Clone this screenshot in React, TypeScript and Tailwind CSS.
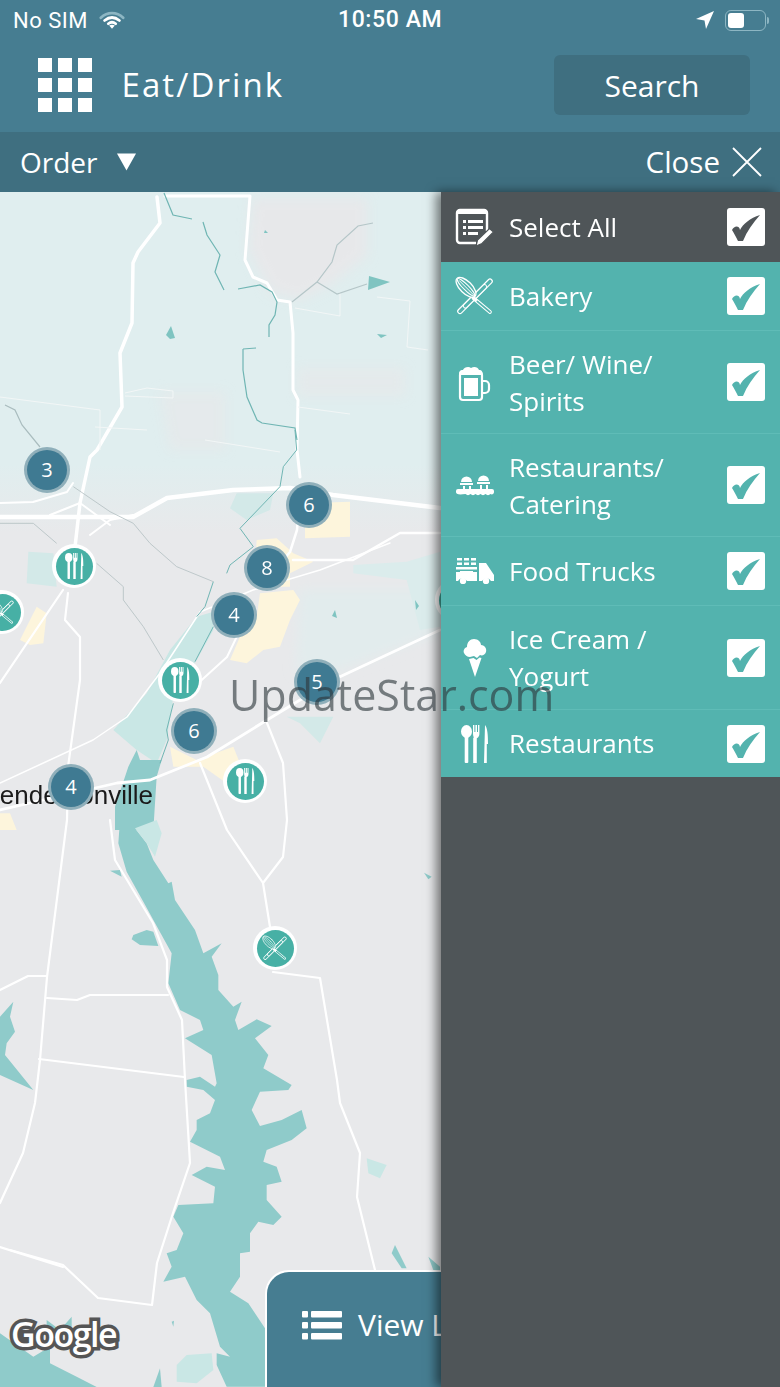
const sans = "font-['Open_Sans',sans-serif]";

function Check({ color }: { color: string }) {
  return (
    <span className="w-[38px] h-[38px] bg-white rounded-[3px] flex items-center justify-center shrink-0">
      <svg width="38" height="38" viewBox="0 0 38 38">
        <path d="M5 22C7 18 12 17 13 22C16 16 23 10 33 7C26 15 20 23 16 33L11 33C9 29 7 25 5 22Z" fill={color} />
      </svg>
    </span>
  );
}

function Whisk({ size, bg, sw = 1 }: { size: number; bg: string; sw?: number }) {
  return (
    <svg width={size} height={size} viewBox="45 50 120 120" fill="none" strokeLinecap="round">
      <line x1="150" y1="66" x2="60" y2="156" stroke="#fff" strokeWidth={17} />
      <line x1="150" y1="66" x2="60" y2="156" stroke={bg} strokeWidth={10} />
      <line x1="134" y1="82" x2="76" y2="140" stroke="#fff" strokeWidth={15} />
      <line x1="134" y1="82" x2="76" y2="140" stroke={bg} strokeWidth={9} />
      <line x1="100" y1="116" x2="150" y2="158" stroke="#fff" strokeWidth={11} />
      <line x1="112" y1="126" x2="150" y2="158" stroke={bg} strokeWidth={5} />
      <ellipse cx="78" cy="84" rx="18" ry="38" transform="rotate(-45 78 84)" fill={bg} stroke="#fff" strokeWidth={4 * sw} />
      <ellipse cx="78" cy="84" rx="8" ry="36" transform="rotate(-45 78 84)" stroke="#fff" strokeWidth={3 * sw} />
      <path d="M58 64L104 110" stroke="#fff" strokeWidth={3 * sw} />
    </svg>
  );
}

function Utensils({ w, h }: { w: number; h: number }) {
  return (
    <svg width={w} height={h} viewBox="0 0 28 38" fill="#fff">
      <ellipse cx="5.5" cy="6.5" rx="5.5" ry="6.5" />
      <rect x="3.7" y="11" width="3.6" height="27" rx="1" />
      <path d="M12 0h1.4v7h1V0h1.6v7h1V0h1.4v9c0 2.4-1.4 3.6-2.6 4.2V38h-3.6V13.2C13.4 12.6 12 11.4 12 9Z" />
      <path d="M24 0c2.4 3 3 9 3 19h-1.2V38H23Z" />
    </svg>
  );
}

function SelectAllIcon() {
  return (
    <svg width="40" height="40" viewBox="0 0 40 40" fill="none">
      <path d="M32 24V6a3 3 0 0 0-3-3H5a3 3 0 0 0-3 3v27a3 3 0 0 0 3 3h16" stroke="#fff" strokeWidth="2.4" />
      <rect x="2" y="3" width="30" height="4" fill="#fff" />
      <g fill="#fff">
        <rect x="8" y="13" width="3" height="3" />
        <rect x="8" y="19" width="3" height="3" />
        <rect x="8" y="25" width="3" height="3" />
        <rect x="13" y="13" width="15" height="3" />
        <rect x="13" y="19" width="15" height="3" />
        <rect x="13" y="25" width="10" height="3" />
      </g>
      <path d="M34.500 21.500l4 3.500-11.500 11.500-6 2.500 1.500-6Z" fill="#fff" stroke="#4f5558" strokeWidth="1.200" />
    </svg>
  );
}

function BeerIcon() {
  return (
    <svg width="36" height="40" viewBox="0 0 36 40" fill="none">
      <path d="M3 13c-2-3 0-5 3-5 1-3 6-4 8-2 3-2 7-1 8 2 3 0 4 2 3 5Z" fill="#fff" />
      <rect x="3" y="10" width="22" height="28" rx="3" stroke="#fff" strokeWidth="2.2" />
      <rect x="7" y="16" width="14" height="18" fill="#fff" />
      <path d="M25 19h3a4 4 0 0 1 4 4v4a4 4 0 0 1-4 4h-3" stroke="#fff" strokeWidth="2.200" />
    </svg>
  );
}

function CateringIcon() {
  return (
    <svg width="38" height="22" viewBox="0 0 38 22" fill="#fff">
      <path d="M5 8a5.500 5.500 0 0 1 11 0Z" />
      <rect x="4" y="9" width="13" height="2" />
      <path d="M22 7a5.500 5.500 0 0 1 11 0Z" />
      <rect x="21" y="8" width="13" height="2" />
      <rect x="7" y="12" width="2" height="3" />
      <rect x="13" y="12" width="2" height="3" />
      <rect x="24" y="11" width="2" height="4" />
      <rect x="30" y="11" width="2" height="4" />
      <path d="M2 15h34a2 2 0 0 1 2 2v1c0 2-2 3-3.500 2-1.500 1.500-3.500 1.500-5 0-1.500 1.500-3.500 1.500-5 0-1.500 1.500-3.500 1.500-5 0-1.500 1.500-3.500 1.500-5 0-1.500 1.500-3.500 1.500-5 0C2 21 0 20 0 18v-1a2 2 0 0 1 2-2Z" />
    </svg>
  );
}

function TruckIcon() {
  return (
    <svg width="38" height="26" viewBox="0 0 38 26" fill="#fff">
      <rect x="1" y="0" width="5" height="2.500" />
      <rect x="8" y="0" width="5" height="2.500" />
      <rect x="15" y="0" width="5" height="2.500" />
      <rect x="1" y="4.500" width="5" height="2.500" />
      <rect x="8" y="4.500" width="5" height="2.500" />
      <rect x="15" y="4.500" width="5" height="2.500" />
      <rect x="0" y="9" width="21" height="2.500" />
      <path d="M0 14h21v9H11a5 5 0 0 0-9 0H0Z" />
      <rect x="4" y="13" width="13" height="2" />
      <circle cx="7" cy="23" r="3.200" />
      <path d="M23 5h7l6 9 2 3v6h-3a5 5 0 0 0-9 0h-3Z" />
      <circle cx="30" cy="23" r="3.200" />
    </svg>
  );
}

function IceCreamIcon() {
  return (
    <svg width="26" height="38" viewBox="0 0 26 38" fill="#fff">
      <path d="M12 0c4 0 7 3 7 6 4 0 6 4 5 7s-4 4-6 3l-3 3-3-2-4 1c-3 0-5-2-6-4s0-5 3-6c0-5 3-8 7-8Z" />
      <path d="M7 20l4.500-1 3 2 3-2.500 2 .5L13 38Z" />
    </svg>
  );
}

function ListIcon() {
  return (
    <svg width="40" height="29" viewBox="0 0 40 29" fill="#fff">
      <rect x="0" y="0" width="6" height="6.500" rx="1" />
      <rect x="0" y="11" width="6" height="6.500" rx="1" />
      <rect x="0" y="22" width="6" height="6.500" rx="1" />
      <rect x="9" y="0" width="31" height="6.500" rx="1" />
      <rect x="9" y="11" width="31" height="6.500" rx="1" />
      <rect x="9" y="22" width="31" height="6.500" rx="1" />
    </svg>
  );
}

function StatusBar() {
  return (
    <div className="h-[40px] relative flex items-center justify-between pl-[13px] pr-[11px] text-white font-['Roboto',sans-serif] text-[22px]">
      <div className="flex items-center gap-[11px]">
        <span className="tracking-[0.5px]">No SIM</span>
        <svg width="26" height="22" viewBox="0 0 28 22" fill="none" strokeLinecap="round">
          <path d="M2 8.500C9 2 19 2 26 8.500" stroke="#8db6c3" strokeWidth="3" />
          <path d="M6 11.500C11 7.500 17 7.500 22 11.500" stroke="#fff" strokeWidth="3" />
          <path d="M10 15C12.500 13 15.500 13 18 15" stroke="#fff" strokeWidth="3" />
          <path d="M14 20.500l3-3.500c-2-1.200-4-1.200-6 0Z" fill="#fff" />
        </svg>
      </div>
      <span className="absolute left-[338px] font-medium text-[23px] tracking-[0.6px]">10:50 AM</span>
      <div className="flex items-center gap-[11px]">
        <svg width="18" height="18" viewBox="0 0 18 18" fill="#fff">
          <path d="M18 0L10 18 8.500 9.500 0 8Z" />
        </svg>
        <div className="flex items-center gap-[1px]">
          <div className="w-[41px] h-[21px] rounded-[6px] border-[1.5px] border-[#8db6c3] p-[2px]">
            <div className="w-[16px] h-full bg-white rounded-[3px]" />
          </div>
          <div className="w-[2px] h-[7px] bg-[#8db6c3] rounded-r-sm" />
        </div>
      </div>
    </div>
  );
}

function Header() {
  return (
    <div className="h-[92px] flex items-start pl-[38px] pr-[30px] pt-[18px]">
      <div className="grid grid-cols-3 gap-[6.500px] w-[53.500px] shrink-0">
        {[0, 1, 2, 3, 4, 5, 6, 7, 8].map((i) => (
          <div key={i} className="h-[13.500px] bg-white" />
        ))}
      </div>
      <div className="ml-[30px] mt-[2px] text-white text-[33px] leading-[50px] font-medium tracking-[2.100px]">Eat/Drink</div>
      <div className="ml-auto -mt-[3px] w-[196px] h-[60px] rounded-[6px] bg-[#3f6f80] text-white text-[30px] flex items-center justify-center">Search</div>
    </div>
  );
}

function OrderBar() {
  return (
    <div className="h-[60px] bg-[#3f6f80] flex items-center justify-between pl-[20px] pr-[18px] text-white">
      <div className="flex items-center gap-[18px] text-[28px]">
        <span>Order</span>
        <svg width="21" height="18" viewBox="0 0 22 18" fill="#fff">
          <path d="M1 0h20L11 18Z" />
        </svg>
      </div>
      <div className="flex items-center gap-[12px] text-[29.500px]">
        <span>Close</span>
        <svg width="30" height="30" viewBox="0 0 30 30" stroke="#fff" strokeWidth="1.800">
          <path d="M1 1L29 29M29 1L1 29" />
        </svg>
      </div>
    </div>
  );
}

function MapDrawing() {
  const road = "#ffffff";
  return (
    <svg className="absolute inset-0" width="441" height="1195" viewBox="0 192 441 1195" fill="none">
      <defs>
        <linearGradient id="pale" x1="0" y1="0" x2="0" y2="1">
          <stop offset="0.8" stopColor="#e0eeef" />
          <stop offset="1" stopColor="#e8e9eb" />
        </linearGradient>
        <filter id="soft" x="-20%" y="-20%" width="140%" height="140%">
          <feGaussianBlur stdDeviation="6" />
        </filter>
      </defs>
      <rect x="0" y="192" width="441" height="1195" fill="#e8e9eb" />
      <rect x="0" y="192" width="441" height="340" fill="url(#pale)" />
      {/* grey clearings up top */}
      <g filter="url(#soft)" fill="#e7e8ea">
        <path d="M252 198H367V256L330 285 300 300 270 292 248 250Z" />
        <path d="M297 368H405V396H297Z" opacity="0.6" />
        <path d="M160 392H225V450H170Z" opacity="0.6" />
      </g>
      {/* pale green patches */}
      <g filter="url(#soft)">
        <path d="M300 590H440V632L335 672H296Z" fill="#e2eced" />
      </g>
      <g transform="translate(0 430) scale(.33333)">
        <path d="M85 365L160 370 170 470 80 460Z" fill="#d3e9e8" />
        <path d="M690 235L710 190H820L810 240 740 270Z" fill="#d3e9e8" />
        <path d="M1060 405L1220 395 1320 365V590L1260 600 1220 450 1060 430Z" fill="#dbecec" />
        <path d="M860 860L1000 860 960 940 900 880Z" fill="#d3e9e8" />
        <path d="M510 660L590 560 640 545 640 600 590 690 520 800 500 930 470 1000 410 960 340 900 440 790Z" fill="#c9e7e5" />
        <path d="M345 1130L385 1010 410 960 420 990 485 990 470 1040 460 1200H345Z" fill="#8fcbca" />
        {/* town */}
        <g fill="#fdf5dc">
          <path d="M915 220L1050 215V320L915 325Z" />
          <path d="M770 330L830 325 880 370 940 395 870 430 870 470H760Z" />
          <path d="M780 490L880 480 900 510 870 570 840 650 790 660 740 700 690 690 720 620 770 560Z" />
          <path d="M510 950L590 990 700 950 720 1000 680 1060 610 1010 520 1010Z" />
          <path d="M60 630L110 530 140 550 130 640 90 645Z" />
          <path d="M0 1150L30 1150 50 1200H0Z" />
        </g>
      </g>
      {/* lake */}
      <g transform="translate(0 820) scale(.33333)" fill="#8fcbca">
        <path d="M445 0L405 25 440 70 460 120 505 190 515 185 525 240 585 330 610 400 665 370 635 410 655 465 655 510 700 560 725 545 705 600 715 630 770 598 815 618 765 655 805 705 790 745 875 795 865 810 780 815 755 870 780 918 845 900 905 870 920 925 875 960 800 990 790 1025 830 1040 845 1085 800 1095 800 1140 845 1190 820 1215 775 1205 750 1240 750 1295 720 1300 720 1370 690 1415 745 1450 795 1525 800 1700 680 1700 650 1635 650 1600 690 1610 660 1580 630 1480 590 1440 555 1370 490 1385 515 1340 500 1300 530 1290 550 1240 520 1190 535 1155 640 1150 645 1100 575 1065 620 1040 675 1050 660 1010 570 965 590 930 590 900 630 880 645 840 610 810 560 800 560 780 600 770 645 800 650 790 635 705 555 655 610 630 600 600 540 570 505 490 515 400 460 300 430 245 380 155 355 70 360 0Z" />
        <path d="M0 590L40 545 30 590 45 635 20 670 15 705 100 810 0 765Z" />
        <path d="M400 345L440 330 460 335 475 378 420 375 395 358Z" />
        <path d="M330 152L360 150 365 170Z" />
        <path d="M405 25L470 0 485 40 465 110 440 70Z" fill="#c9e7e5" />
        <path d="M1100 1015L1160 1035 1140 1075 1105 1060Z" fill="#c9e7e5" />
        <path d="M1185 1275L1220 1345H1205L1175 1300Z" />
        <path d="M1285 1310L1320 1340V1350H1300Z" />
        <path d="M1272 158L1295 170 1285 178Z" />
      </g>
      <g transform="translate(0 1250) scale(.33333)">
        <path d="M0 250L100 320 150 290 150 340 230 380 290 411H0Z" fill="#8fcbca" />
        <path d="M140 210L180 240 215 200 215 250 140 250Z" fill="#8fcbca" />
        <path d="M480 355L460 411H485Z" fill="#8fcbca" />
        <path d="M530 345L560 315 635 310 640 360 590 400 530 395Z" fill="#c9e7e5" />
        <path d="M515 215L522 212 520 230Z" fill="#8fcbca" />
      </g>
      {/* roads */}
      <g strokeLinejoin="round" strokeLinecap="round" stroke={road}>
        <path d="M157 197L160 223 138 252 133 263 132 323 120 353 122 407 97 450 90 457 80 503 75 547" strokeWidth="3.500" />
        <path d="M165 196H250L245 260 253 277 267 283 277 300 290 302 293 333 293 390 298 400 297 450 300 477" strokeWidth="3" />
        <path d="M0 517H133L167 498 233 490 290 488 333 495 440 508" strokeWidth="4.500" />
        <path d="M0 503L33 502 67 492 73 483M50 515L80 503 110 525M133 515L110 520 90 535" strokeWidth="2" />
        <path d="M300 490L297 530 290 552 270 575M293 560H353L400 533H440" strokeWidth="2.500" />
        <path d="M200 612L253 590 320 570 390 543" strokeWidth="1.500" />
        <path d="M63 590L0 683M68 593L65 620 80 637 80 680 68 767 67 820 47 977 40 1060 35 1103 23 1153 0 1203" strokeWidth="2.200" />
        <path d="M440 630L333 680 267 720 207 757 150 780 117 783 0 810" strokeWidth="2.800" />
        <path d="M0 783L93 740 127 717 160 673 200 612" strokeWidth="1.500" />
        <path d="M183 697L227 657 240 630" strokeWidth="2" />
        <path d="M267 723L283 763 287 820 283 857 263 883M200 763L227 830 263 883 270 927" strokeWidth="2.200" />
        <path d="M273 972L320 978 337 1080 340 1103 360 1153 357 1197 375 1270" strokeWidth="2.200" />
        <path d="M110 820L115 860 153 923 167 960 167 987 182 1020 185 1080 190 1163 173 1213 157 1263 152 1305 98 1298 63 1265 10 1250" strokeWidth="2.200" />
        <path d="M47 998L77 1000 90 995H168M39 1059L184 1077M0 990L28 976H47M0 1247L63 1267" strokeWidth="2.200" />
      </g>
      {/* faint lines */}
      <g stroke="#f2f6f6" strokeWidth="1">
        <path d="M0 397L100 410V450M125 393L147 388 173 391 173 398 125 396M295 308L340 316V292M377 297L410 301 407 347 428 350M298 407L350 414" />
        <path d="M95 427L147 430M205 440L280 452" />
      </g>
      {/* creeks */}
      <g stroke="#6fb5b3" strokeWidth="1.200">
        <path d="M164 193L173 215 192 219M203 222L207 235 220 255 215 272 224 290M238 289L260 285 272 292 277 302 275 315 269 325V337M243 349L256 348M243 349V370L247 397 257 420 262 423 295 428 297 440" />
        <path d="M292 302L317 282 332 262 337 245 358 226 373 223M317 282L337 294 367 284" stroke="#b5c6c8" />
        <path d="M5 405L15 410 22 425 40 447" stroke="#a9bcbe" />
      </g>
      <g transform="translate(0 430) scale(.33333)" fill="none">
        <path d="M885 0L890 60 850 110 840 170 720 295 760 350 690 405 680 430" stroke="#6fb5b3" strokeWidth="3" />
        <path d="M640 455L615 530 590 560" stroke="#6fb5b3" strokeWidth="3" />
        <path d="M640 590L585 695M520 820L500 900 505 930 480 1000" stroke="#6fb5b3" strokeWidth="3" />
        <path d="M220 170L330 245 400 280 450 340 530 410 640 455M290 400L370 470 370 510 430 590 490 690M0 280L100 280 170 340" stroke="#b5c0c3" strokeWidth="2.500" />
      </g>
      <g fill="#7fc4c1">
        <path d="M369 276L390 282 368 290Z" />
        <path d="M171 326L175 338 170 339 166 335Z" />
        <path d="M265 230L268 233 264 233Z" />
        <path d="M377 334L387 335 381 338Z" />
        <path d="M415 600L419 606 416 610Z" />
        <path d="M335 610L337 618 332 616Z" />
      </g>
    </svg>
  );
}

function Cluster({ x, y, n }: { x: number; y: number; n: number }) {
  return (
    <div
      className="absolute w-[46px] h-[46px] rounded-full bg-[#8fafba] flex items-center justify-center"
      style={{ left: x - 23, top: y - 192 - 23 }}
    >
      <div className="w-[40px] h-[40px] rounded-full bg-[#3f7a92] text-white text-[20px] flex items-center justify-center">{n}</div>
    </div>
  );
}

function Pin({ x, y, whisk }: { x: number; y: number; whisk?: boolean }) {
  return (
    <div
      className="absolute w-[44px] h-[44px] rounded-full bg-white flex items-center justify-center"
      style={{ left: x - 22, top: y - 192 - 22 }}
    >
      <div className="w-[37px] h-[37px] rounded-full bg-[#47b0a5] flex items-center justify-center">
        {whisk ? <Whisk size={26} bg="#47b0a5" sw={0.8} /> : <Utensils w={19} h={26} />}
      </div>
    </div>
  );
}

function MapArea() {
  return (
    <div className="relative w-[441px] h-full overflow-hidden bg-[#e8e9eb] font-['Open_Sans',sans-serif]">
      <MapDrawing />
      <span className="absolute right-[288px] top-[589px] text-[26px] leading-[28px] text-[#1a1a1a] font-['Liberation_Sans',sans-serif] whitespace-nowrap">
        Hendersonville
      </span>
      <Cluster x={47} y={470} n={3} />
      <Cluster x={309} y={505} n={6} />
      <Cluster x={267} y={568} n={8} />
      <Cluster x={234} y={615} n={4} />
      <Cluster x={317} y={682} n={5} />
      <Cluster x={194} y={731} n={6} />
      <Cluster x={71} y={787} n={4} />
      <Pin x={74} y={566} />
      <Pin x={180} y={680} />
      <Pin x={245} y={781} />
      <Pin x={275} y={948} whisk />
      <Pin x={2} y={612} whisk />
      <Pin x={457} y={600} />
      <div className="absolute left-[11px] top-[1120px] text-[34px] leading-[44px] font-semibold tracking-[-1.500px] text-white font-['Open_Sans',sans-serif] [-webkit-text-stroke:7px_#555] [paint-order:stroke_fill]">
        Google
      </div>
      <div className="absolute left-[265px] top-[1078px] w-[260px] h-[140px] bg-[#467d91] border-l-2 border-t-2 border-white rounded-tl-[24px] pl-[35px] pt-[37px] flex items-start gap-[16px] text-white text-[30px]">
        <div className="mt-[2px]">
          <ListIcon />
        </div>
        <span className="leading-[32px] whitespace-nowrap">View List</span>
      </div>
    </div>
  );
}

const rows = [
  { h: "h-[69px]", text: "flex-1", label: ["Bakery"], icon: <Whisk size={40} bg="#53b3ae" /> },
  { h: "h-[103px]", text: "flex-1 pt-[2px]", label: ["Beer/ Wine/", "Spirits"], icon: <BeerIcon /> },
  { h: "h-[103px]", text: "flex-1 pt-[2px]", label: ["Restaurants/", "Catering"], icon: <CateringIcon /> },
  { h: "h-[69px]", text: "flex-1", label: ["Food Trucks"], icon: <TruckIcon /> },
  { h: "h-[104px]", text: "flex-1", label: ["Ice Cream /", "Yogurt"], icon: <IceCreamIcon /> },
  { h: "h-[67px]", text: "flex-1", label: ["Restaurants"], icon: <Utensils w={28} h={38} /> },
];

function FilterPanel() {
  return (
    <div className="relative w-[339px] h-full bg-[#4f5558] text-white text-[26px] leading-[37px] shadow-[-5px_0_10px_rgba(0,0,0,0.5)]">
      <div className="h-[70px] flex items-center pr-[15px]">
        <div className="w-[68px] flex justify-center shrink-0">
          <SelectAllIcon />
        </div>
        <span className="flex-1">Select All</span>
        <Check color="#4f5558" />
      </div>
      {rows.map((row, i) => (
        <div
          key={row.label[0] + i}
          className={`${row.h} bg-[#53b3ae] border-b border-[#5fbcb7] last:border-b-0 flex items-center pr-[15px]`}
        >
          <div className="w-[68px] flex justify-center shrink-0">{row.icon}</div>
          <div className={row.text}>
            {row.label.map((line) => (
              <div key={line}>{line}</div>
            ))}
          </div>
          <Check color="#53b3ae" />
        </div>
      ))}
    </div>
  );
}

export default function App() {
  return (
    <div className={`relative w-[780px] h-[1387px] overflow-hidden bg-[#467d91] flex flex-col ${sans}`}>
      <StatusBar />
      <Header />
      <OrderBar />
      <div className="flex flex-1 min-h-0">
        <MapArea />
        <FilterPanel />
      </div>
      {/* watermark */}
      <div className="absolute left-[229px] top-[666px] text-[43px] leading-[58px] text-[rgba(45,55,60,0.62)] whitespace-nowrap font-['Open_Sans',sans-serif]">
        UpdateStar.com
      </div>
    </div>
  );
}
